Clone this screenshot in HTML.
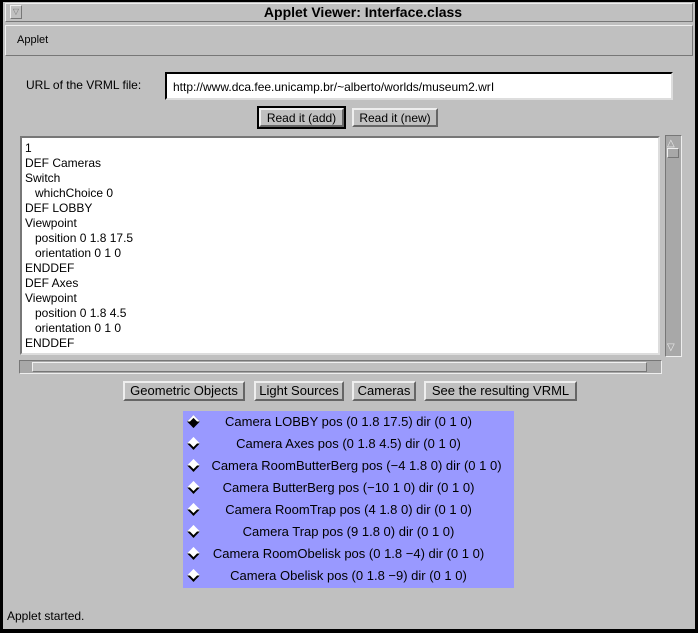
<!DOCTYPE html><html><head><style>
*{margin:0;padding:0;box-sizing:border-box}
body{width:698px;height:633px;background:#000;position:relative;overflow:hidden;font-family:"Liberation Sans",sans-serif;font-size:12px;color:#000}
.a{position:absolute}
.win{left:3px;top:2px;width:692px;height:627px;background:#c0c0c0}
.bev{border:1px solid;border-color:#f0f0f0 #777 #777 #f0f0f0}
.btn{position:absolute;height:20px;background:#c0c0c0;border:2px solid;border-color:#eee #666 #666 #eee;font-size:12px;text-align:center;line-height:16px;white-space:nowrap}
.ta div{height:15px;line-height:15px;white-space:pre}
.rad{position:absolute;left:0;width:331px;text-align:center;font-size:13px;line-height:14px;white-space:nowrap}
.dia{position:absolute;left:6px;width:9px;height:9px;transform:rotate(45deg);background:#fff;border:2px solid;border-color:#fff #000 #000 #fff}
</style></head><body>
<div class="a win"></div>
<div class="a bev" style="left:5px;top:3px;width:688px;height:19px;background:#c0c0c0"></div>
<div class="a bev" style="left:10px;top:5px;width:12px;height:14px;font-size:8px;color:#777;text-align:center;line-height:12px">▽</div>
<div class="a" style="left:0;top:4px;width:726px;text-align:center;font-weight:bold;font-size:14px">Applet Viewer: Interface.class</div>
<div class="a bev" style="left:5px;top:25px;width:688px;height:31px"></div>
<div class="a" style="left:17px;top:34px;font-size:11px">Applet</div>
<div class="a" style="left:26px;top:78px">URL of the VRML file:</div>
<div class="a" style="left:165px;top:72px;width:508px;height:28px;background:#fff;border:2px solid;border-color:#000 #ddd #ddd #000;padding:6px 6px;font-size:12px">http://www.dca.fee.unicamp.br/~alberto/worlds/museum2.wr<span>I</span></div>
<div class="a" style="left:257px;top:106px;width:89px;height:23px;border:2px solid #000"></div>
<div class="btn" style="left:259px;top:108px;width:85px;height:19px">Read it (add)</div>
<div class="btn" style="left:352px;top:108px;width:86px;height:19px">Read it (new)</div>
<div class="a ta" style="left:20px;top:136px;width:640px;height:219px;background:#fff;border:2px solid;border-color:#777 #ddd #ddd #777;padding:3px 3px;font-size:12px">
<div>1</div><div>DEF Cameras</div><div>Switch</div><div>   whichChoice 0</div><div>DEF LOBBY</div><div>Viewpoint</div><div>   position 0 1.8 17.5</div><div>   orientation 0 1 0</div><div>ENDDEF</div><div>DEF Axes</div><div>Viewpoint</div><div>   position 0 1.8 4.5</div><div>   orientation 0 1 0</div><div>ENDDEF</div></div>
<div class="a" style="left:665px;top:135px;width:17px;height:222px;background:#a8a8a8;border:1px solid;border-color:#777 #eee #eee #777"></div>
<div class="a" style="left:667px;top:138px;font-size:10px;color:#eee">△</div>
<div class="a bev" style="left:667px;top:148px;width:12px;height:10px"></div>
<div class="a" style="left:667px;top:342px;font-size:10px;color:#eee">▽</div>
<div class="a" style="left:19px;top:360px;width:643px;height:14px;background:#a8a8a8;border:1px solid;border-color:#777 #eee #eee #777"></div>
<div class="a bev" style="left:32px;top:362px;width:615px;height:10px;background:#c0c0c0"></div>
<div class="btn" style="left:123px;top:381px;width:122px;font-size:13px">Geometric Objects</div>
<div class="btn" style="left:254px;top:381px;width:90px;font-size:13px">Light Sources</div>
<div class="btn" style="left:352px;top:381px;width:64px;font-size:13px">Cameras</div>
<div class="btn" style="left:424px;top:381px;width:153px;font-size:13px">See the resulting VRML</div>
<div class="a" style="left:183px;top:411px;width:331px;height:177px;background:#9999ff">
<div class="dia" style="top:6px;background:#000"></div><div class="rad" style="top:4px">Camera LOBBY pos (0 1.8 17.5) dir (0 1 0)</div>
<div class="dia" style="top:28px"></div><div class="rad" style="top:26px">Camera Axes pos (0 1.8 4.5) dir (0 1 0)</div>
<div class="dia" style="top:50px"></div><div class="rad" style="top:48px;left:8px">Camera RoomButterBerg pos (−4 1.8 0) dir (0 1 0)</div>
<div class="dia" style="top:72px"></div><div class="rad" style="top:70px">Camera ButterBerg pos (−10 1 0) dir (0 1 0)</div>
<div class="dia" style="top:94px"></div><div class="rad" style="top:92px">Camera RoomTrap pos (4 1.8 0) dir (0 1 0)</div>
<div class="dia" style="top:116px"></div><div class="rad" style="top:114px">Camera Trap pos (9 1.8 0) dir (0 1 0)</div>
<div class="dia" style="top:138px"></div><div class="rad" style="top:136px">Camera RoomObelisk pos (0 1.8 −4) dir (0 1 0)</div>
<div class="dia" style="top:160px"></div><div class="rad" style="top:158px">Camera Obelisk pos (0 1.8 −9) dir (0 1 0)</div>
</div>
<div class="a" style="left:7px;top:609px;font-size:12px">Applet started.</div>
</body></html>
